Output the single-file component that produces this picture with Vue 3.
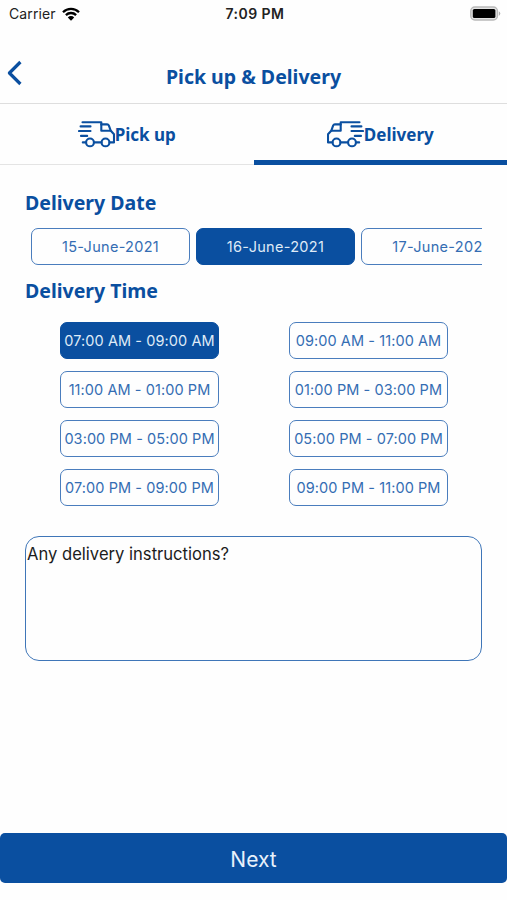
<script setup>
import { ref } from "vue";

const tabs = ['Pick up', 'Delivery']
const dates = ['15-June-2021', '16-June-2021', '17-June-2021']
const times = [
  '07:00 AM - 09:00 AM',
  '09:00 AM - 11:00 AM',
  '11:00 AM - 01:00 PM',
  '01:00 PM - 03:00 PM',
  '03:00 PM - 05:00 PM',
  '05:00 PM - 07:00 PM',
  '07:00 PM - 09:00 PM',
  '09:00 PM - 11:00 PM'
]

const activeTab = ref('Delivery')
const selectedDate = ref('16-June-2021')
const selectedTime = ref('07:00 AM - 09:00 AM')
const instructions = ref('')
</script>

<template>
  <div class="screen">
    <div class="status-bar">
      <div class="carrier">
        <span>Carrier</span>
        <svg class="wifi" viewBox="0 0 18 14">
          <path d="M1 5.2a11.4 11.4 0 0 1 16 0M3.9 8.1a7.2 7.2 0 0 1 10.2 0" fill="none" stroke="#000" stroke-width="2.3" />
          <path d="M9 13.7L5.8 10.4a4.6 4.6 0 0 1 6.4 0z" fill="#000" />
        </svg>
      </div>
      <div class="clock">7:09 PM</div>
      <div class="battery">
        <svg viewBox="0 0 31 16">
          <rect x="0.8" y="1" width="26.6" height="13" rx="4" fill="#e4e4e4" stroke="#b9b9b9" stroke-width="1.4" />
          <rect x="2.8" y="2.9" width="22.6" height="9.2" rx="1.6" fill="#000" />
          <path d="M28.8 5.3q1.5 .8 1.5 2.3t-1.5 2.3z" fill="#b0b0b0" />
        </svg>
      </div>
    </div>

    <div class="header">
      <button class="back" aria-label="Back">
        <svg viewBox="0 0 16 26">
          <path d="M13.4 2L2.4 13l11 11" fill="none" stroke="#0a4fa0" stroke-width="3.2" stroke-linejoin="round" />
        </svg>
      </button>
      <h1>Pick up &amp; Delivery</h1>
    </div>

    <div class="tabs">
      <button
        v-for="tab in tabs"
        :key="tab"
        class="tab"
        :class="{ active: tab === activeTab }"
        @click="activeTab = tab"
      >
        <svg class="truck" :class="{ flipped: tab === 'Delivery' }" viewBox="0 0 37 28">
          <g fill="none" stroke="#0a4fa0" stroke-width="2.1" stroke-linecap="round" stroke-linejoin="round">
            <!-- roof and speed lines -->
            <path d="M4.5 2.2H23.3V10.8H32.5M2.6 6.4H12.5M1 11H12.5M3 15.9H9.2M4.8 22.4H8" />
            <!-- cab and chassis -->
            <path d="M23.3 4.4H29.2Q30.3 4.4 30.8 5.4L32.8 10.8L36 14.2V22.4H31.6M16.2 22.4H23.4" />
            <circle cx="12" cy="22.4" r="3.9" />
            <circle cx="27.5" cy="22.4" r="3.9" />
          </g>
        </svg>
        <span>{{ tab }}</span>
      </button>
    </div>

    <div class="content">
      <h2>Delivery Date</h2>
      <div class="dates">
        <button
          v-for="date in dates"
          :key="date"
          class="chip"
          :class="{ selected: date === selectedDate }"
          @click="selectedDate = date"
        >{{ date }}</button>
      </div>

      <h2>Delivery Time</h2>
      <div class="times">
        <button
          v-for="time in times"
          :key="time"
          class="chip time"
          :class="{ selected: time === selectedTime }"
          @click="selectedTime = time"
        >{{ time }}</button>
      </div>

      <textarea v-model="instructions" placeholder="Any delivery instructions?"></textarea>
    </div>

    <button class="next">Next</button>
  </div>
</template>

<style>
body {
  margin: 0;
  background: #fefefe;
}
</style>

<style scoped>
.screen {
  display: flex;
  flex-direction: column;
  box-sizing: border-box;
  height: 900px;
  padding-bottom: 17px;
  overflow: hidden;
  background: #fefefe;
  font-family: Inter, 'Liberation Sans', sans-serif;
}
button {
  margin: 0;
  padding: 0;
  border: none;
  background: none;
  font-family: inherit;
  cursor: pointer;
}
svg {
  display: block;
}
.status-bar {
  display: grid;
  grid-template-columns: 1fr auto 1fr;
  align-items: center;
  height: 27px;
  padding: 0 6px 1px 9px;
  font-size: 14px;
  color: #222;
}
.carrier {
  display: flex;
  align-items: center;
  gap: 6px;
  letter-spacing: 0.1px;
}
.wifi {
  width: 18px;
  height: 14px;
}
.clock {
  font-weight: 600;
  letter-spacing: 0.45px;
}
.battery svg {
  width: 31px;
  height: 16px;
  margin-left: auto;
}
.header {
  display: grid;
  grid-template-columns: 40px 1fr 40px;
  align-items: center;
  box-sizing: border-box;
  height: 76px;
  padding-top: 22px;
  border-bottom: 1px solid #dedede;
}
.back {
  width: 16px;
  height: 26px;
  margin: -7px 0 0 7px;
}
.back svg {
  width: 16px;
  height: 26px;
}
h1, h2 {
  margin: 0;
  font-family: 'Noto Sans', 'Open Sans', sans-serif;
  font-weight: 700;
  color: #0a4fa0;
}
h1 {
  font-size: 19.5px;
  line-height: 26px;
  text-align: center;
}
.tabs {
  display: flex;
  height: 61px;
}
.tab {
  display: flex;
  flex: 1;
  align-items: center;
  justify-content: center;
  box-sizing: border-box;
  padding: 4px 0 4px;
  border-bottom: 1px solid #e4e4e4;
  font-family: 'Noto Sans', 'Open Sans', sans-serif;
  font-size: 17px;
  font-weight: 700;
  color: #0a4fa0;
}
.tab.active {
  padding-bottom: 0;
  border-bottom: 5px solid #0a4fa0;
}
.truck {
  width: 37px;
  height: 28px;
}
.flipped {
  transform: scaleX(-1);
}
.content {
  flex: 1;
  padding: 24px 25px 0;
}
h2 {
  font-size: 19.5px;
  line-height: 28px;
}
.dates {
  display: flex;
  gap: 6px;
  margin: 11px 0 12px;
  padding-left: 6px;
  overflow: hidden;
}
.chip {
  flex: none;
  box-sizing: border-box;
  width: 159px;
  height: 37px;
  border: 1.4px solid #4a7dbd;
  border-radius: 7px;
  font-size: 14.5px;
  letter-spacing: 0.3px;
  white-space: nowrap;
  color: #346db3;
}
.chip.time {
  letter-spacing: 0.08px;
}
.chip.selected {
  border-color: #0a4fa0;
  background: #0a4fa0;
  color: #dfeaf7;
}
.times {
  display: grid;
  grid-template-columns: 159px 159px;
  gap: 12px 70px;
  margin: 17px 0 30px;
  padding-left: 35px;
}
textarea {
  display: block;
  box-sizing: border-box;
  width: 100%;
  height: 125px;
  padding: 7px 1px;
  border: 1.4px solid #3f76b8;
  border-radius: 14px;
  outline: none;
  resize: none;
  background: transparent;
  font-family: inherit;
  font-size: 16.6px;
  line-height: 20px;
}
textarea::placeholder {
  color: #1c1c1c;
}
.next {
  height: 50px;
  padding-top: 2px;
  border-radius: 5px;
  background: #0a4fa0;
  font-size: 21px;
  color: #e8f1fb;
}
</style>
